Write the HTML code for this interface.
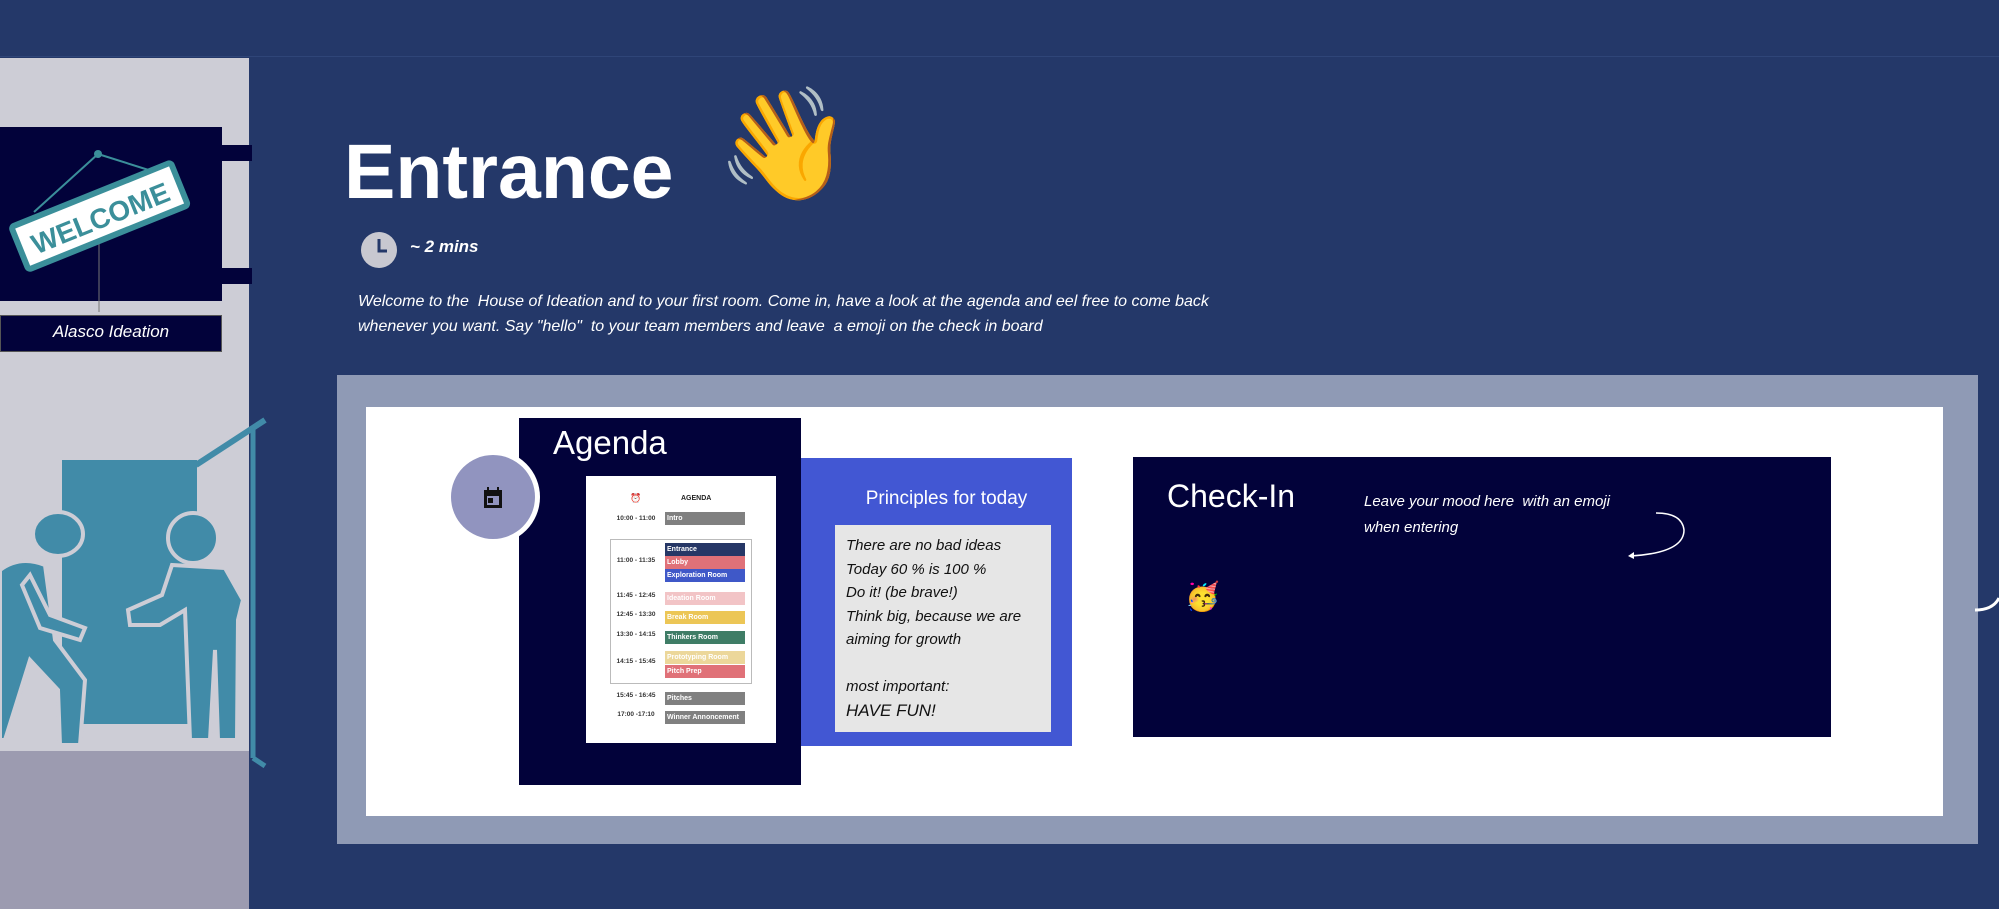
<!DOCTYPE html>
<html><head><meta charset="utf-8"><style>
*{margin:0;padding:0;box-sizing:border-box}
body{width:1999px;height:909px;overflow:hidden;background:#243869;font-family:"Liberation Sans",sans-serif;position:relative}
.a{position:absolute}
.hand{font-family:"Liberation Sans",sans-serif;font-style:italic;color:#fff}
.bar{position:absolute;left:79px;width:80px;height:13px;font-size:7px;font-weight:bold;color:#fff;padding-left:2px;line-height:13px}
.t{position:absolute;left:20px;width:60px;text-align:center;font-size:6.5px;font-weight:bold;color:#333}
</style></head><body>
<div class="a" style="left:0;top:0;width:1999px;height:57px;background:#243869;border-bottom:1px solid #2f4578"></div>
<!-- left panel -->
<div class="a" style="left:0;top:58px;width:249px;height:693px;background:#cdcdd6"></div>
<div class="a" style="left:0;top:751px;width:249px;height:158px;background:#9c9bb0"></div>
<div class="a" style="left:0;top:127px;width:222px;height:174px;background:#02023a"></div>
<div class="a" style="left:222px;top:145px;width:30px;height:16px;background:#02023a"></div>
<div class="a" style="left:222px;top:268px;width:30px;height:16px;background:#02023a"></div>
<svg class="a" style="left:0;top:127px" width="222" height="200">
<line x1="98" y1="27" x2="34" y2="85" stroke="#3b8f9a" stroke-width="2"/>
<line x1="98" y1="27" x2="155" y2="45" stroke="#3b8f9a" stroke-width="2"/>
<circle cx="98" cy="27" r="4" fill="#3b8f9a"/>
<line x1="99" y1="90" x2="99" y2="185" stroke="#777" stroke-width="1"/>
<g transform="translate(100,90) rotate(-22)">
<rect x="-86" y="-24" width="172" height="46" rx="3" fill="#fff" stroke="#3b8f9a" stroke-width="6"/>
<text x="0" y="11" text-anchor="middle" font-family="Liberation Sans" font-weight="bold" font-size="28" fill="#3b8f9a">WELCOME</text>
</g></svg>
<div class="a" style="left:0;top:315px;width:222px;height:37px;background:#02023a;border:1px solid #555"></div>
<div class="a hand" style="left:0;top:322px;width:222px;text-align:center;font-size:17px">Alasco Ideation</div>
<svg class="a" style="left:0;top:400px" width="280" height="370">
<rect x="62" y="60" width="135" height="264" fill="#418ba8"/>
<polyline points="196,65 265,20" stroke="#418ba8" stroke-width="6" fill="none"/>
<line x1="253" y1="28" x2="253" y2="358" stroke="#418ba8" stroke-width="5"/>
<line x1="253" y1="358" x2="265" y2="366" stroke="#418ba8" stroke-width="5"/>
<ellipse cx="58" cy="134" rx="25" ry="22" fill="#418ba8" stroke="#cdcdd6" stroke-width="4"/>
<path d="M0,170 Q20,155 45,165 L55,240 L85,280 L80,345 L60,345 L58,290 L30,260 L5,340 L0,340Z" fill="#418ba8" stroke="#cdcdd6" stroke-width="4"/>
<path d="M30,175 L50,215 L85,228 L80,240 L40,228 L22,185Z" fill="#418ba8" stroke="#cdcdd6" stroke-width="4"/>
<ellipse cx="193" cy="138" rx="25" ry="25" fill="#418ba8" stroke="#cdcdd6" stroke-width="4"/>
<path d="M172,165 L225,168 L243,200 L238,220 L237,340 L218,340 L215,250 L210,340 L190,340 L185,210 L160,225 L130,225 L128,210 L162,195Z" fill="#418ba8" stroke="#cdcdd6" stroke-width="4"/>
</svg>
<!-- header -->
<div class="a" style="left:344px;top:127px;font-size:77px;font-weight:bold;color:#fff;line-height:90px">Entrance</div>
<div class="a" style="left:716px;top:80px;font-size:110px;line-height:130px">👋</div>
<svg class="a" style="left:360px;top:231px" width="38" height="38"><circle cx="19" cy="19" r="18" fill="#c8c8d0"/><path d="M19,8 V20 H27" stroke="#243869" stroke-width="3" fill="none"/></svg>
<div class="a hand" style="left:410px;top:237px;font-size:17px;font-weight:bold">~ 2 mins</div>
<div class="a hand" style="left:358px;top:289px;font-size:16px;line-height:25px;width:880px">Welcome to the&nbsp; House of Ideation and to your first room. Come in, have a look at the agenda and eel free to come back<br>whenever you want. Say "hello"&nbsp; to your team members and leave&nbsp; a emoji on the check in board</div>
<!-- board -->
<div class="a" style="left:337px;top:375px;width:1641px;height:469px;background:#8f9ab5"></div>
<div class="a" style="left:366px;top:407px;width:1577px;height:409px;background:#fff"></div>
<svg class="a" style="left:1975px;top:590px" width="24" height="30"><path d="M0,20 Q18,20 24,8" stroke="#fff" stroke-width="3" fill="none"/></svg>
<!-- agenda -->
<div class="a" style="left:519px;top:418px;width:282px;height:367px;background:#02023a"></div>
<div class="a" style="left:553px;top:424px;font-size:33px;color:#fff">Agenda</div>
<div class="a" style="left:446px;top:450px;width:94px;height:94px;border-radius:50%;background:#fff"></div>
<div class="a" style="left:451px;top:455px;width:84px;height:84px;border-radius:50%;background:#9194bf"></div>
<svg class="a" style="left:479px;top:484px" width="28" height="28"><rect x="5" y="6" width="18" height="18" fill="#111"/><rect x="8" y="12" width="12" height="9" fill="#9194bf"/><rect x="9" y="14" width="5" height="5" fill="#111"/><rect x="8" y="3" width="2" height="5" fill="#111"/><rect x="18" y="3" width="2" height="5" fill="#111"/></svg>
<div class="a" style="left:586px;top:476px;width:190px;height:267px;background:#fff">
<div class="a" style="left:44px;top:17px;font-size:9px;color:#c33">⏰</div>
<div class="a" style="left:95px;top:19px;font-size:7px;font-weight:bold;color:#222">AGENDA</div>
<div class="t" style="top:39px">10:00 - 11:00</div><div class="bar" style="top:36px;background:#808080">Intro</div>
<div class="a" style="left:24px;top:63px;width:142px;height:145px;border:1px solid #bbb"></div>
<div class="t" style="top:81px">11:00 - 11:35</div>
<div class="bar" style="top:67px;background:#263766">Entrance</div>
<div class="bar" style="top:80px;background:#e07178">Lobby</div>
<div class="bar" style="top:93px;background:#3f58c8">Exploration Room</div>
<div class="t" style="top:116px">11:45 - 12:45</div><div class="bar" style="top:116px;background:#f2c4c6">Ideation Room</div>
<div class="t" style="top:135px">12:45 - 13:30</div><div class="bar" style="top:135px;background:#ecc656">Break Room</div>
<div class="t" style="top:155px">13:30 - 14:15</div><div class="bar" style="top:155px;background:#3f7d66">Thinkers Room</div>
<div class="t" style="top:182px">14:15 - 15:45</div>
<div class="bar" style="top:175px;background:#ecd79a">Prototyping Room</div>
<div class="bar" style="top:189px;background:#e07178">Pitch Prep</div>
<div class="t" style="top:216px">15:45 - 16:45</div><div class="bar" style="top:216px;background:#808080">Pitches</div>
<div class="t" style="top:235px">17:00 -17:10</div><div class="bar" style="top:235px;background:#808080">Winner Annoncement</div>
</div>
<!-- principles -->
<div class="a" style="left:801px;top:458px;width:271px;height:288px;background:#4257d3"></div>
<div class="a" style="left:801px;top:488px;width:291px;text-align:center;font-size:19px;color:#fff">Principles for today</div>
<div class="a" style="left:835px;top:525px;width:216px;height:207px;background:#e6e6e6"></div>
<div class="a hand" style="left:846px;top:534px;font-size:15px;line-height:23.5px;color:#111">There are no bad ideas<br>Today 60 % is 100 %<br>Do it! (be brave!)<br>Think big, because we are<br>aiming for growth<br><br>most important:<br><span style="font-size:17px">HAVE FUN!</span></div>
<!-- check-in -->
<div class="a" style="left:1133px;top:457px;width:698px;height:280px;background:#02023a"></div>
<div class="a" style="left:1167px;top:478px;font-size:32px;color:#fff">Check-In</div>
<div class="a hand" style="left:1364px;top:489px;font-size:15px;line-height:26px">Leave your mood here&nbsp; with an emoji<br>when entering</div>
<svg class="a" style="left:1620px;top:505px" width="80" height="60"><path d="M36,8 Q62,8 64,25 Q64,48 10,51" stroke="#fff" stroke-width="1.5" fill="none"/><path d="M14,47 L8,51 L14,54Z" fill="#fff"/></svg>
<div class="a" style="left:1185px;top:580px;font-size:28px;line-height:34px">🥳</div>
</body></html>
